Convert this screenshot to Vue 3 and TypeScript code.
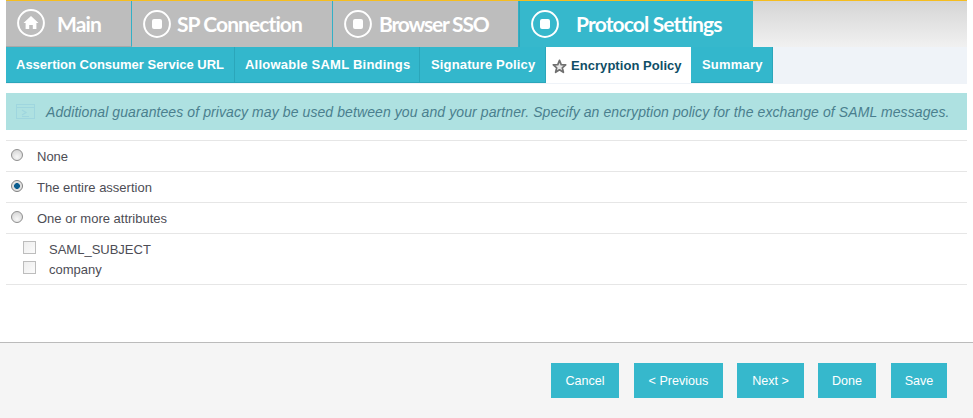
<script setup lang="ts">
interface MainTab { label: string; icon: 'home' | 'stop'; active?: boolean; cls: string }
const mainTabs: MainTab[] = [
  { label: 'Main', icon: 'home', cls: 'm-main' },
  { label: 'SP Connection', icon: 'stop', cls: 'm-sp' },
  { label: 'Browser SSO', icon: 'stop', cls: 'm-browser' },
  { label: 'Protocol Settings', icon: 'stop', active: true, cls: 'm-protocol' },
]
const subTabs = [
  { label: 'Assertion Consumer Service URL', cls: 's-a' },
  { label: 'Allowable SAML Bindings', cls: 's-b' },
  { label: 'Signature Policy', cls: 's-c' },
  { label: 'Encryption Policy', cls: 's-d', active: true },
  { label: 'Summary', cls: 's-e' },
]
const radios = [
  { label: 'None', checked: false },
  { label: 'The entire assertion', checked: true },
  { label: 'One or more attributes', checked: false },
]
const attrs = ['SAML_SUBJECT', 'company']
const buttons = [
  { label: 'Cancel', cls: 'b-cancel' },
  { label: '< Previous', cls: 'b-prev' },
  { label: 'Next >', cls: 'b-next' },
  { label: 'Done', cls: 'b-done' },
  { label: 'Save', cls: 'b-save' },
]
</script>

<template>
  <div class="page">
    <div class="content">
      <nav class="main-tabs">
        <div v-for="t in mainTabs" :key="t.label" class="main-tab" :class="[t.cls, { active: t.active }]">
          <svg class="tab-icon" width="28" height="28" viewBox="0 0 28 28">
            <circle cx="14" cy="14" r="12.9" fill="none" stroke="#fff" stroke-width="2" />
            <path v-if="t.icon === 'home'" d="M14 7 L21.5 14 H19.4 V20 H15.8 V16 H12.2 V20 H8.6 V14 H6.5 Z" fill="#fff" />
            <rect v-else x="9" y="9" width="10" height="10" rx="2" fill="#fff" />
          </svg>
          <span class="main-label">{{ t.label }}</span>
        </div>
        <div class="main-fill"></div>
      </nav>
      <nav class="sub-tabs">
        <div v-for="s in subTabs" :key="s.label" class="sub-tab" :class="[s.cls, { active: s.active }]">
          <svg v-if="s.active" class="star" width="15" height="15" viewBox="0 0 15 15">
            <path d="M7.5 1.4 L9.2 5.6 L13.7 5.9 L10.3 8.8 L11.4 13.3 L7.5 10.8 L3.6 13.3 L4.7 8.8 L1.3 5.9 L5.8 5.6 Z" fill="#e8e8e8" stroke="#707070" stroke-width="1.7" stroke-linejoin="round" />
          </svg>
          <span>{{ s.label }}</span>
        </div>
      </nav>
      <div class="info">
        <svg class="info-icon" width="20" height="16" viewBox="0 0 20 16">
          <rect x="0.5" y="0.5" width="18" height="14" fill="none" stroke="#9fd6df" />
          <path d="M1 3.5 H18" stroke="#9fd6df" />
          <path d="M6 6 L10 8.5 L6 11 M6 12.5 H13" fill="none" stroke="#9fd6df" stroke-width="1.2" />
        </svg>
        <span class="info-text">Additional guarantees of privacy may be used between you and your partner. Specify an encryption policy for the exchange of SAML messages.</span>
      </div>
      <div class="form">
        <label v-for="r in radios" :key="r.label" class="radio-row">
          <span class="radio" :class="{ checked: r.checked }"></span>
          <span>{{ r.label }}</span>
        </label>
        <div class="attrs">
          <label v-for="a in attrs" :key="a" class="attr">
            <span class="check"></span>
            <span>{{ a }}</span>
          </label>
        </div>
      </div>
    </div>
    <footer class="footer">
      <button v-for="b in buttons" :key="b.label" class="btn" :class="b.cls" type="button">{{ b.label }}</button>
    </footer>
  </div>
</template>

<style>
html, body { margin: 0; background: #fff; }
</style>

<style scoped>
.page {
  width: 973px;
  height: 418px;
  display: flex;
  flex-direction: column;
  overflow: hidden;
  font-family: "Liberation Sans", Arial, sans-serif;
}
.content { flex: 0 0 342px; padding: 0 6px; box-sizing: border-box; }
.main-tabs { display: flex; height: 47px; border-top: 1px solid #f5bd1f; box-sizing: border-box; }
.main-tab {
  display: flex;
  align-items: center;
  box-sizing: border-box;
  background: #bdbdbd;
  border-right: 1px solid #33b0c6;
  padding-left: 11px;
  padding-bottom: 1px;
  color: #fff;
}
.main-tab.active { background: #36b8cc; border-right: 0; padding-left: 11px; border-left: 1px solid #2ea5b8; }
.m-main { width: 126px; border-bottom: 1px solid #a8a8a8; }
.m-sp { width: 201px; }
.m-browser { width: 186px; }
.m-protocol { width: 234px; }
.tab-icon { flex: none; }
.main-label {
  font-family: "Lato", sans-serif;
  font-weight: 700;
  font-size: 21px;
  letter-spacing: -0.85px;
  white-space: nowrap;
}
.m-main .main-label { margin-left: 12px; }
.m-sp .main-label { margin-left: 6px; letter-spacing: -0.92px; }
.m-browser .main-label { margin-left: 7px; letter-spacing: -1.2px; }
.m-protocol .main-label { margin-left: 17px; }
.main-fill { flex: 1; background: linear-gradient(#d5d5d5, #f1f1f1); }
.sub-tabs { display: flex; height: 37px; background: #eff3f8; }
.sub-tab {
  display: flex;
  align-items: center;
  box-sizing: border-box;
  height: 36px;
  background: #33b7cc;
  border-right: 1px solid #2ba6ba;
  border-bottom: 1px solid #2ba6ba;
  color: #fff;
  font-family: "Liberation Sans", Arial, sans-serif;
  font-weight: 700;
  font-size: 13px;
  letter-spacing: 0.1px;
  padding-left: 10px;
  white-space: nowrap;
}
.sub-tab.active {
  background: #fff;
  color: #0f4e66;
  border: 0;
  padding-left: 6px;
}
.star { margin-right: 4px; margin-top: 3px; flex: none; }
.s-a { width: 229px; letter-spacing: 0; }
.s-b { width: 185px; letter-spacing: 0.23px; }
.s-c { width: 126px; padding-left: 11px; letter-spacing: 0.15px; }
.s-d { width: 145px; letter-spacing: 0.05px; }
.s-e { width: 82px; padding-left: 11px; letter-spacing: 0.2px; }
.info {
  display: flex;
  align-items: center;
  height: 37px;
  margin-top: 9px;
  background: #aee1e1;
  padding-left: 10px;
  box-sizing: border-box;
}
.info-icon { flex: none; }
.info-text {
  margin-left: 10px;
  font-style: italic;
  font-size: 14px;
  letter-spacing: 0.09px;
  color: #4a7f8e;
  white-space: nowrap;
}
.form { margin-top: 10px; border-top: 1px solid #e6e6e6; font-size: 13px; color: #4d4d55; }
.radio-row {
  display: flex;
  align-items: center;
  height: 31px;
  box-sizing: border-box;
  border-bottom: 1px solid #e6e6e6;
  padding-top: 1px;
}
.radio {
  width: 12px;
  height: 12px;
  margin: -4px 14px 0 5px;
  border-radius: 50%;
  box-sizing: border-box;
  border: 1px solid #8f8f8f;
  background: radial-gradient(circle at 50% 70%, #f8f8f8, #cfcfcf);
  flex: none;
  display: block;
}
.radio.checked {
  background: radial-gradient(circle at 50% 50%, #0b5d8f 0 2.6px, #dcdcdc 3.2px, #f2f2f2);
  border-color: #7f7f7f;
}
.attrs { border-bottom: 1px solid #e6e6e6; height: 51px; box-sizing: border-box; padding-top: 5px; }
.attr { display: flex; align-items: center; height: 20px; }
.check {
  width: 13px;
  height: 13px;
  box-sizing: border-box;
  margin: -3px 13px 0 17px;
  border: 1px solid #bdbdbd;
  background: linear-gradient(135deg, #eee, #fbfbfb);
  flex: none;
}
.footer {
  flex: 1;
  border-top: 1px solid #bbb;
  background: #f5f5f5;
  display: flex;
  align-items: flex-start;
  padding: 20px 0 0 551px;
}
.btn {
  height: 35px;
  border: 0;
  padding: 0;
  background: #36b8cc;
  color: #fff;
  font-family: "Liberation Sans", Arial, sans-serif;
  font-size: 12.6px;
}
.b-cancel { width: 68px; margin-right: 15px; }
.b-prev { width: 89px; margin-right: 14px; }
.b-next { width: 67px; margin-right: 14px; }
.b-done { width: 58px; margin-right: 15px; }
.b-save { width: 56px; }
</style>
